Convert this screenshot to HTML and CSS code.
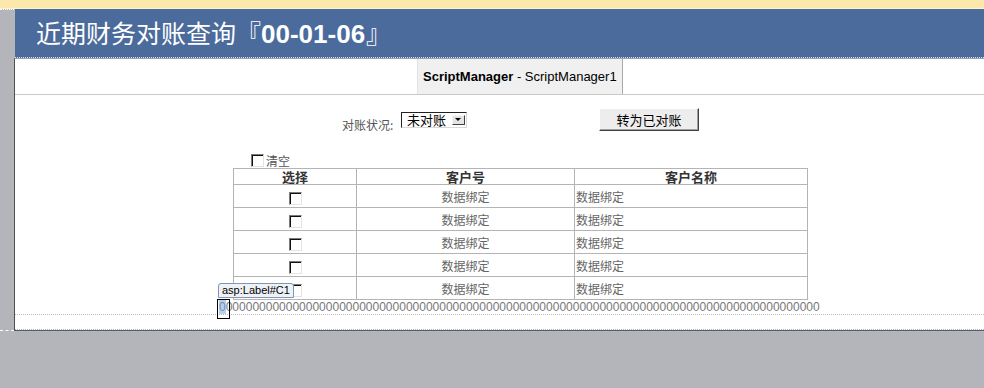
FILE: index.html
```html
<!DOCTYPE html>
<html>
<head>
    <title>近期财务对账查询</title>
    <link rel="stylesheet" href="styles.css">
</head>
<body>
    <div class="topbar"></div>
    <div class="frame">
        <div class="side"></div>
        <div class="main">
            <div class="header">近期财务对账查询<span class="date">『<b>00-01-06</b>』</span></div>
            <div class="content">
                <div class="sm-row">
                    <div class="sm-box"><b>ScriptManager</b> - ScriptManager1</div>
                </div>
                <div class="filter">
                    <span class="filter-label">对账状况:</span>
                    <div class="select"><span class="select-text">未对账</span><span class="select-arrow"></span></div>
                    <button class="btn">转为已对账</button>
                </div>
                <div class="clear-row"><span class="chk"></span>清空</div>
                <table class="grid">
                    <colgroup><col class="c1"><col class="c2"><col class="c3"></colgroup>
                    <tr class="head"><th>选择</th><th>客户号</th><th>客户名称</th></tr>
                    <tr><td class="pick"><span class="chk"></span></td><td class="num">数据绑定</td><td class="name">数据绑定</td></tr>
                    <tr><td class="pick"><span class="chk"></span></td><td class="num">数据绑定</td><td class="name">数据绑定</td></tr>
                    <tr><td class="pick"><span class="chk"></span></td><td class="num">数据绑定</td><td class="name">数据绑定</td></tr>
                    <tr><td class="pick"><span class="chk"></span></td><td class="num">数据绑定</td><td class="name">数据绑定</td></tr>
                    <tr><td class="pick"><span class="chk"></span></td><td class="num">数据绑定</td><td class="name">数据绑定</td></tr>
                </table>
                <div class="zeros"><span class="tag">asp:Label#C1</span><span class="sel">0</span>00000000000000000000000000000000000000000000000000000000000000000000000000000000000000000</div>
                <div class="footer-gap"></div>
            </div>
        </div>
    </div>
</body>
</html>
```

FILE: styles.css
```css
body {
    margin: 0;
    background-color: #b4b5ba;
    font-family: "Noto Sans CJK SC", sans-serif;
}
.topbar {
    height: 8px;
    background-color: #fce8aa;
    border-bottom: 1px solid #fdf3d4;
}
.frame {
    display: flex;
}
.side {
    width: 14px;
    border-top: 1px dotted #ffffff;
    border-bottom: 1px dashed #ffffff;
}
.main {
    flex: 1;
}
.header {
    height: 48px;
    margin-left: 1px;
    padding-left: 21px;
    background-color: #4b6b9d;
    border-bottom: 1px dotted #d5dceb;
    color: #ffffff;
    font-size: 25px;
    line-height: 46px;
    white-space: nowrap;
}
.header .date b {
    margin: 0 1px 0 0;
    font-family: "Liberation Sans", sans-serif;
    font-weight: bold;
    font-size: 26px;
}
.content {
    background-color: #ffffff;
    border-left: 1px solid #4f4f4f;
    border-top: 1px solid #9aa3b3;
    border-bottom: 1px solid #5a5f6a;
}
.sm-row {
    padding-left: 402px;
    border-bottom: 1px solid #c9c9c9;
}
.sm-box {
    box-sizing: border-box;
    width: 206px;
    height: 35px;
    padding-left: 5px;
    background-color: #f0f0f0;
    border-left: 1px solid #e2e2e2;
    border-right: 1px solid #a9a9a9;
    font-family: "Liberation Sans", sans-serif;
    font-size: 13px;
    line-height: 35px;
    color: #000000;
    white-space: nowrap;
}
.filter {
    display: flex;
    align-items: center;
    height: 23px;
    padding-top: 13px;
    padding-left: 327px;
}
.filter-label {
    align-self: flex-end;
    width: 59px;
    font-size: 12px;
    line-height: 12px;
    color: #555555;
}
.select {
    box-sizing: border-box;
    display: flex;
    align-items: center;
    width: 66px;
    height: 16px;
    border-top: 1px solid #222222;
    border-left: 1px solid #222222;
    border-right: 1px solid #d8d8d8;
    border-bottom: 1px solid #d8d8d8;
    background-color: #ffffff;
}
.select-text {
    flex: 1;
    padding-left: 5px;
    font-size: 13px;
    line-height: 14px;
    color: #000000;
}
.select-arrow {
    box-sizing: border-box;
    position: relative;
    width: 13px;
    height: 10px;
    margin-right: 1px;
    background-color: #e4e4e4;
    border-top: 1px solid #f6f6f6;
    border-left: 1px solid #f6f6f6;
    border-right: 1px solid #404040;
    border-bottom: 1px solid #404040;
}
.select-arrow::after {
    content: "";
    position: absolute;
    left: 2px;
    top: 2px;
    border-left: 3px solid transparent;
    border-right: 3px solid transparent;
    border-top: 3px solid #000000;
}
.btn {
    box-sizing: border-box;
    width: 100px;
    height: 23px;
    margin-left: 132px;
    padding: 0;
    background-color: #ededed;
    border: 1px solid;
    border-color: #ffffff #404040 #404040 #ffffff;
    box-shadow: inset -1px -1px #a0a0a0;
    font-family: "Noto Sans CJK SC", sans-serif;
    font-size: 13px;
    line-height: 19px;
    color: #000000;
}
.clear-row {
    display: flex;
    align-items: center;
    height: 15px;
    margin-top: 22px;
    padding-left: 236px;
    font-size: 12px;
    line-height: 15px;
    color: #555555;
}
.chk {
    box-sizing: border-box;
    display: inline-block;
    width: 13px;
    height: 13px;
    margin-right: 2px;
    background-color: #ffffff;
    border: 1px solid;
    border-color: #7a7a7a #e4e4e4 #e4e4e4 #7a7a7a;
    box-shadow: inset 1px 1px #111111;
}
.grid {
    width: 575px;
    margin-left: 218px;
    border-collapse: collapse;
    border: 1px solid #b4b4b4;
}
.grid .c1 {
    width: 123px;
}
.grid .c2 {
    width: 218px;
}
.grid th,
.grid td {
    padding: 0;
    border: 1px solid #b4b4b4;
    font-size: 12px;
    color: #666666;
    font-weight: normal;
}
.grid .head th {
    height: 15px;
    font-size: 13px;
    font-weight: bold;
    color: #333333;
    line-height: 15px;
}
.grid td {
    height: 22px;
}
.grid .pick {
    text-align: center;
}
.grid .pick .chk {
    margin: 0 0 0 1px;
    vertical-align: middle;
}
.grid .num {
    text-align: center;
}
.grid .name {
    padding-left: 1px;
}
.zeros {
    position: relative;
    padding-left: 204px;
    font-family: "Liberation Sans", sans-serif;
    font-size: 12px;
    line-height: 14px;
    color: #777777;
    white-space: nowrap;
}
.tag {
    position: absolute;
    left: 203px;
    top: -17px;
    height: 13px;
    padding: 0 3px;
    background-color: #eef2f7;
    border: 1px solid #8096b5;
    border-radius: 3px 3px 0 0;
    font-size: 11px;
    line-height: 13px;
    color: #000000;
}
.sel {
    position: relative;
    background-color: #b9d1ec;
    color: #6c8fbd;
}
.sel::after {
    content: "";
    position: absolute;
    left: -2px;
    top: -1px;
    width: 11px;
    height: 18px;
    border: 1px solid #000000;
}
.footer-gap {
    height: 14px;
    border-top: 1px dotted #bdbdbd;
    border-bottom: 1px dotted #a8b0bb;
}
```
